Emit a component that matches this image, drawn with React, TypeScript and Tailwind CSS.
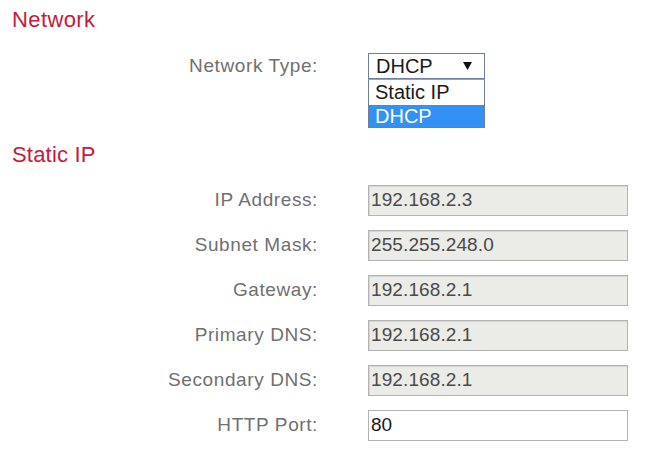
const fields = [
  { label: "IP Address:", value: "192.168.2.3", disabled: true },
  { label: "Subnet Mask:", value: "255.255.248.0", disabled: true },
  { label: "Gateway:", value: "192.168.2.1", disabled: true },
  { label: "Primary DNS:", value: "192.168.2.1", disabled: true },
  { label: "Secondary DNS:", value: "192.168.2.1", disabled: true },
  { label: "HTTP Port:", value: "80", disabled: false },
];

export default function App() {
  return (
    <div className="w-[649px] h-[465px] bg-white overflow-hidden font-['Liberation_Sans',Arial,sans-serif]">
      <h2 className="pl-3 pt-[7px] text-[22px] tracking-[0.4px] leading-[26px] text-[#c41a3c]">Network</h2>

      <div className="flex items-center mt-5 h-[26px]">
        <div className="w-[318px] text-right text-[19px] tracking-[0.6px] text-[#707070]">Network Type:</div>
        <div className="relative ml-[50px]">
          <div className="w-[117px] h-[26px] border border-[#6f7f99] bg-white flex items-center justify-between pl-[7px] pr-[12px] text-[20px] text-[#1a1a1a]">
            <span>DHCP</span>
            <svg width="9" height="8" viewBox="0 0 9 8">
              <path d="M0 0 H9 L4.5 8 Z" fill="#111" />
            </svg>
          </div>
          <div className="absolute left-0 top-[26px] w-[117px] border border-[#6f7f99] border-t-[#9aa3b2] bg-white text-[20px] leading-[24px] text-[#1a1a1a]">
            <div className="pl-[6px] h-[25px]">Static IP</div>
            <div className="pl-[6px] h-[22px] bg-[#3390f4] text-white leading-[22px]">DHCP</div>
          </div>
        </div>
      </div>

      <h2 className="pl-3 mt-[63px] text-[22px] tracking-[0.2px] leading-[26px] text-[#c41a3c]">Static IP</h2>

      <div className="flex flex-col gap-[14px] mt-[17px]">
        {fields.map((f) => (
          <div key={f.label} className="flex items-center h-[31px]">
            <div className="w-[318px] text-right text-[19px] tracking-[0.6px] text-[#707070]">{f.label}</div>
            <div
              className={
                f.disabled
                  ? "ml-[50px] w-[260px] h-[31px] border border-[#b3b3b3] bg-[#ebebe7] flex items-center pl-[2px] text-[19px] tracking-[0.1px] text-[#4a4a4a] shadow-[inset_1px_1px_0_#d6d6d6]"
                  : "ml-[50px] w-[260px] h-[31px] border border-[#b3b3b3] bg-white flex items-center pl-[2px] text-[19px] text-[#1a1a1a]"
              }
            >
              {f.value}
            </div>
          </div>
        ))}
      </div>
    </div>
  );
}
